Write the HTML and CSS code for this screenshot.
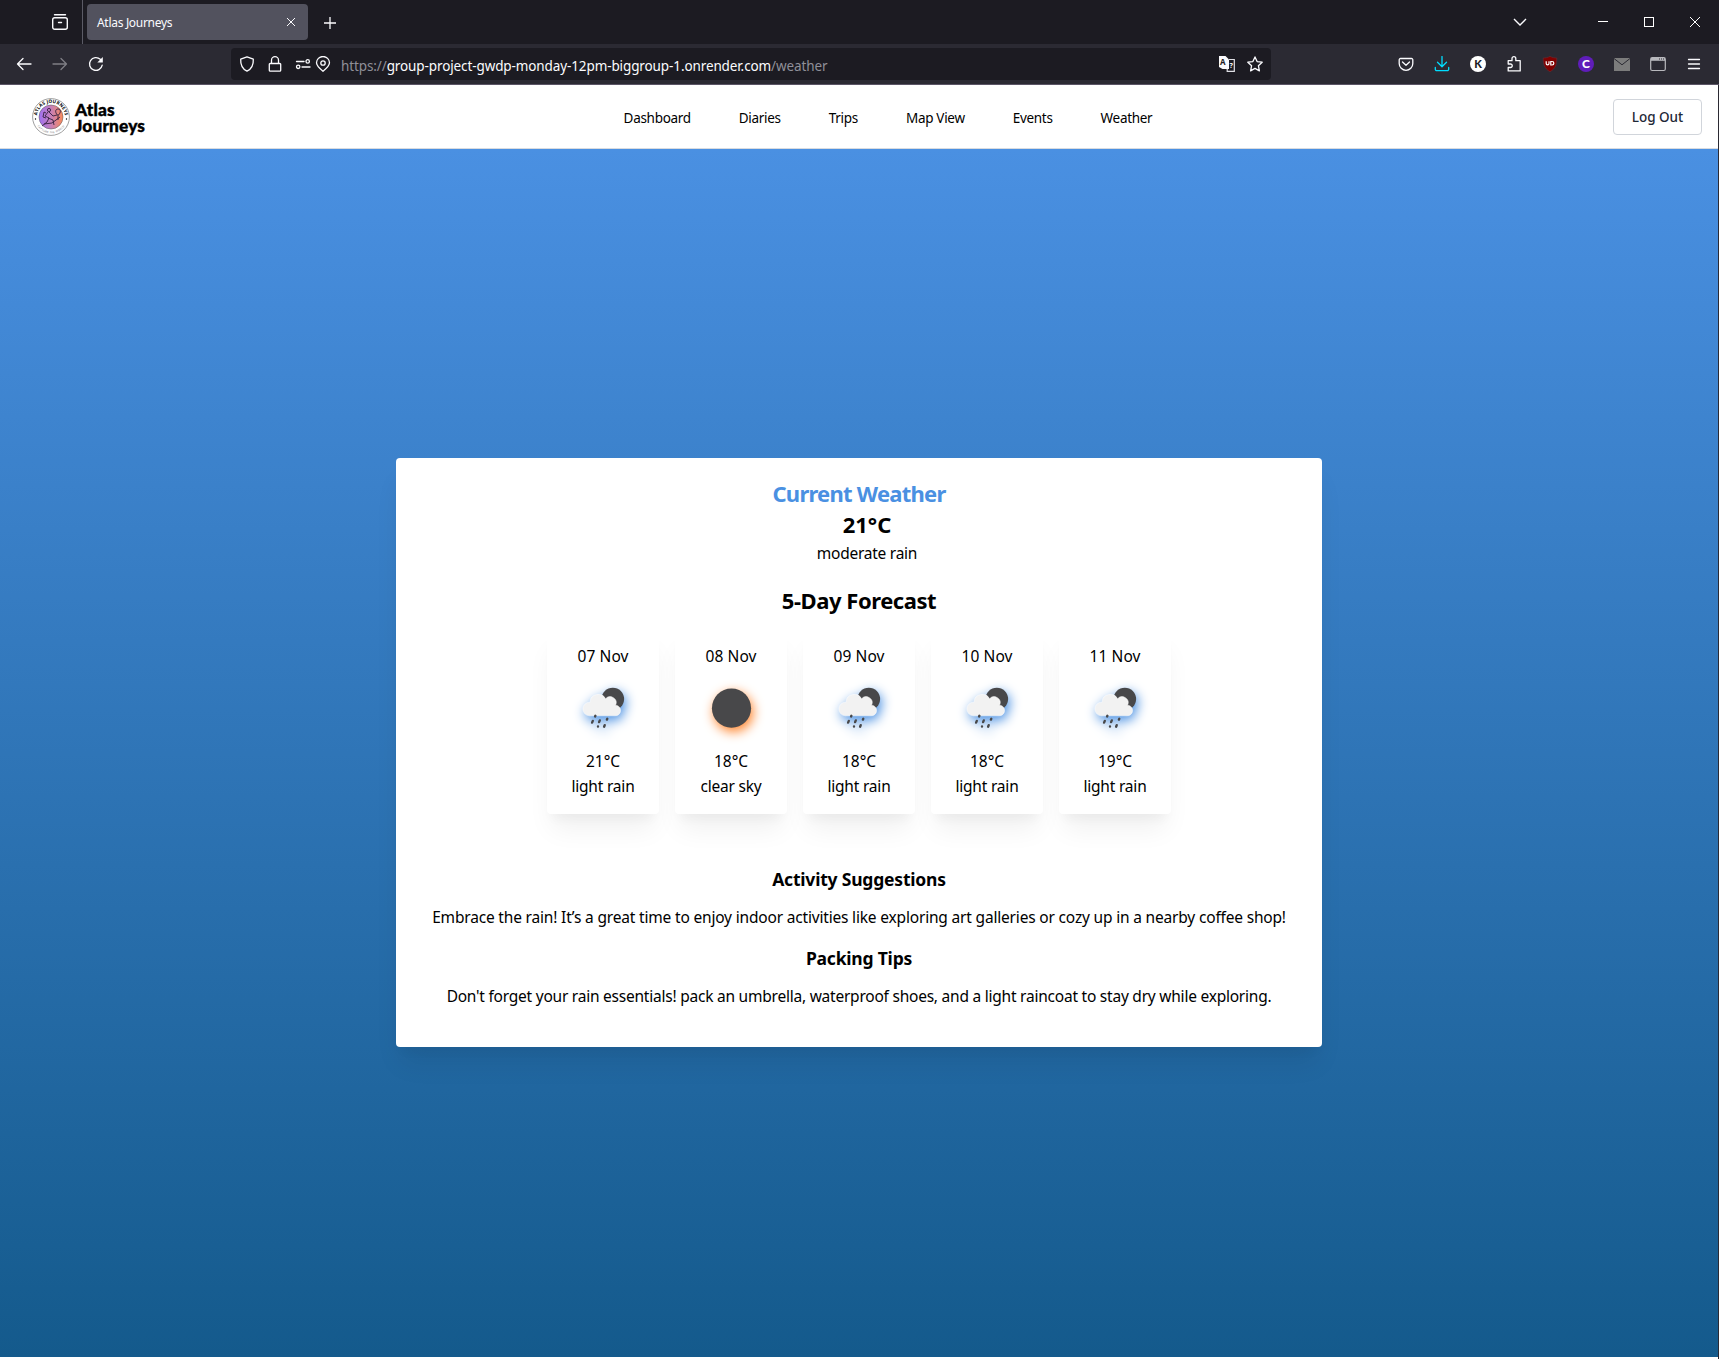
FILE: index.html
```html
<!DOCTYPE html>
<html lang="en">
<head>
<meta charset="utf-8">
<title>Atlas Journeys</title>
<link rel="stylesheet" href="styles.css">
</head>
<body>
<svg width="0" height="0" class="defs" aria-hidden="true">
  <symbol id="rain" viewBox="0 0 80 80">
    <circle cx="49.800" cy="30" r="11.300" fill="#48484a"/>
    <path d="M26.400 46.800A6.800 6.800 0 0 1 27 33.200A8.300 8.300 0 0 1 42.600 29.800A6 6 0 0 1 52.600 36.200A5.300 5.300 0 0 1 52 46.800Z" fill="#f2f2f2" stroke="#fff" stroke-width=".5"/>
    <g stroke="#48484a" stroke-width="2.400" stroke-linecap="round"><path d="M32.400 46.800l-.3.700M29.800 51.900l-.7 1.700M36.800 51.400l-.7 1.700M44.300 49.800l-.4.800M35 57.500v.1M41.700 56.200l-.6 1.500"/></g>
  </symbol>
</svg>
<div class="window">
  <div class="tabbar">
    <div class="view-btn"><svg width="18" height="18" viewBox="0 0 18 18" fill="none" stroke="#fbfbfe" stroke-width="1.400" stroke-linecap="round"><path d="M3.500 1.700h11"/><rect x="1.700" y="4.700" width="14.600" height="11.600" rx="2"/><path d="M7.500 9.500h3"/></svg></div>
    <div class="tab"><span class="tab-title">Atlas Journeys</span>
      <svg width="10" height="10" viewBox="0 0 10 10" stroke="#fbfbfe" stroke-width="1"><path d="M1 1l8 8M9 1L1 9"/></svg></div>
    <svg class="plus" width="12" height="12" viewBox="0 0 12 12" stroke="#fbfbfe" stroke-width="1.300"><path d="M6 0v12M0 6h12"/></svg>
    <div class="win-controls">
      <svg class="chev" width="14" height="8" viewBox="0 0 14 8" fill="none" stroke="#fbfbfe" stroke-width="1.400"><path d="M1 1l6 6 6-6"/></svg>
      <svg width="46" height="44" viewBox="0 0 46 44" stroke="#fff"><path d="M18 21.500h10"/></svg>
      <svg width="46" height="44" viewBox="0 0 46 44" stroke="#fff" fill="none"><rect x="18.500" y="17.500" width="9" height="9"/></svg>
      <svg width="46" height="44" viewBox="0 0 46 44" stroke="#fff"><path d="M18 17l10 10M28 17L18 27"/></svg>
    </div>
  </div>
  <div class="toolbar">
    <div class="nav-btns">
      <div class="tb"><svg width="16" height="16" viewBox="0 0 16 16" class="ln"><path d="M15 8H1.500M7 2.500L1.500 8 7 13.500"/></svg></div>
      <div class="tb dim"><svg width="16" height="16" viewBox="0 0 16 16" class="ln"><path d="M1 8h13.500M9 2.500L14.500 8 9 13.500"/></svg></div>
      <div class="tb"><svg width="16" height="16" viewBox="0 0 16 16" class="ln"><path d="M14.200 9.200A6.400 6.400 0 1 1 12.300 3.300L13.500 4.500"/><path d="M14.800 1v5.500H9.300z" fill="#fbfbfe" stroke="none"/></svg></div>
    </div>
    <div class="urlbar">
      <svg class="i-shield" width="16" height="16" viewBox="0 0 16 16"><path class="ln" d="M8 .8l6.300 2.400c.3 5.500-1.300 9.500-6.300 12-5-2.500-6.600-6.500-6.300-12z"/></svg>
      <svg class="i-lock" width="16" height="16" viewBox="0 0 16 16"><path class="ln" d="M3.200 7.500h9.600a.9.900 0 0 1 .9.900v5.900a.9.900 0 0 1-.9.900H3.200a.9.900 0 0 1-.9-.9V8.400a.9.900 0 0 1 .9-.9zM4.500 7.500V4.200a3.500 3.500 0 0 1 7 0v3.300"/></svg>
      <svg class="i-perm" width="16" height="16" viewBox="0 0 16 16"><path class="ln" d="M1.500 5.500h7.500M7 11h8"/><circle class="ln" cx="12.700" cy="5.400" r="1.700"/><circle class="ln" cx="3.200" cy="10.800" r="1.700"/></svg>
      <svg class="i-pin" width="16" height="16" viewBox="0 0 16 16"><path class="ln" d="M8 15.300C4 12 1.500 9.500 1.500 6.800a6.500 6.300 0 0 1 13 0C14.500 9.500 12 12 8 15.300z"/><circle class="ln" cx="8" cy="7" r="2.200"/></svg>
      <span class="url">https://<b>group-project-gwdp-monday-12pm-biggroup-1.onrender.com</b>/weather</span>
      <svg class="i-tr" width="16" height="16" viewBox="0 0 16 16"><path d="M0 0h6.500L10 3.500V13H3.500L0 11z" fill="#fbfbfe"/><text x="1" y="8.800" class="tr-a">A</text><path d="M10 3.500h5.300v11.800H8.200V13" fill="none" stroke="#e0e0e6" stroke-width="1.200"/><text x="10.400" y="12.300" class="tr-q">?</text></svg>
      <svg class="i-star" width="16" height="16" viewBox="0 0 16 16"><path class="ln" d="M8 .9l2.100 4.700 5.100.6-3.800 3.500 1 5.200L8 12.400l-4.400 2.500 1-5.200L.8 6.200l5.100-.6z"/></svg>
    </div>
    <div class="exts">
      <div class="tb"><svg width="16" height="16" viewBox="0 0 16 16" class="ln"><path d="M2.500 2.500h11a1.300 1.300 0 0 1 1.300 1.300V7.500a6.800 6.800 0 0 1-13.600 0V3.800a1.300 1.300 0 0 1 1.300-1.300z"/><path d="M4.500 6L8 9.300 11.500 6"/></svg></div>
      <div class="tb"><svg width="16" height="16" viewBox="0 0 16 16" class="ln cyan"><path d="M8 .5v10M3.500 6.300L8 10.700l4.500-4.400M1.300 11.500v1.700a1.500 1.500 0 0 0 1.500 1.500h10.400a1.500 1.500 0 0 0 1.500-1.500v-1.700"/></svg></div>
      <div class="tb"><span class="disc k">K</span></div>
      <div class="tb"><svg width="16" height="16" viewBox="0 0 16 16" class="ln"><path d="M2.200 8V4.700H6V2.600a1.900 1.900 0 0 1 3.800 0v2.100h4.400v10.200H2.200v-3.400h2.300a1.700 1.700 0 0 0 0-3.500z"/></svg></div>
      <div class="tb"><svg width="16" height="16" viewBox="0 0 16 16"><path d="M8 .3c2 1.300 4.500 1.700 6.800 1.700 0 6.500-1 10.300-6.800 13.800C2.200 12.300 1.200 8.500 1.200 2 3.500 2 6 1.600 8 .3z" fill="#800000" stroke="#5f3039" stroke-width=".6"/><path d="M4.200 5.300v2.200a1.400 1.400 0 0 0 2.800 0V5.300M8.800 5.500h1.300a1.700 1.700 0 0 1 0 3.500H8.800z" fill="none" stroke="#fff" stroke-width="1.200"/></svg></div>
      <div class="tb"><span class="disc c">C</span></div>
      <div class="tb"><svg width="16" height="16" viewBox="0 0 16 16"><path d="M0 2h16v13H0z" fill="#7c7c7c"/><path d="M0 2.500l8 6.300 8-6.300" fill="none" stroke="#2b2a33" stroke-width="1"/></svg></div>
      <div class="tb"><svg width="16" height="16" viewBox="0 0 16 16"><rect x=".7" y="1.700" width="14.600" height="12.800" rx="1.500" fill="none" stroke="#b8b8bd" stroke-width="1.200"/><path d="M1 2h14v2.800H1z" fill="#b8b8bd"/><path d="M9 3h1M11 3h1M13 3h1" stroke="#2b2a33"/></svg></div>
      <div class="tb"><svg width="16" height="16" viewBox="0 0 16 16" class="ln"><path d="M2.500 3.500h11M2.500 8h11M2.500 12.500h11"/></svg></div>
    </div>
  </div>
  <div class="page">
    <header class="header">
      <div class="brand">
        <svg width="38" height="38" viewBox="0 0 38 38">
          <defs><linearGradient id="lg"><stop offset="0" stop-color="#a070f4"/><stop offset=".5" stop-color="#c680b8"/><stop offset="1" stop-color="#fb8a58"/></linearGradient>
          <path id="arcT" d="M4.900 19a14.100 14.100 0 0 1 28.200 0"/><path id="arcB" d="M2.700 19a16.300 16.300 0 0 0 32.600 0"/></defs>
          <circle cx="19" cy="19" r="18.400" fill="#fff" stroke="#777" stroke-width=".7"/>
          <circle cx="19" cy="19" r="12" fill="url(#lg)" stroke="#555" stroke-width=".5"/>
          <text class="ring-t"><textPath href="#arcT" startOffset="50%" text-anchor="middle" textLength="41">ATLAS JOURNEYS</textPath></text>
          <text class="ring-b"><textPath href="#arcB" startOffset="50%" text-anchor="middle">CAPTURE THE WORLD</textPath></text>
          <circle cx="3.500" cy="21" r=".7"/><circle cx="34.500" cy="21" r=".7"/>
          <g fill="none" stroke="#33203f" stroke-width=".9"><circle cx="17" cy="12" r="1.600"/><path d="M16 14l-3 4 4 2-2 4-5 4M17 14l4 4 4-1M16 20l5 2 1 5M12 26l8-1 8-6M14 15l-2-1-1 5 3 1"/><path d="M25.500 17c-3-3-2-6 .5-6s3.500 3 .500 6zM26 17v5"/></g>
        </svg>
        <div class="brand-name"><span>Atlas</span><span>Journeys</span></div>
      </div>
      <nav class="nav"><a>Dashboard</a><a>Diaries</a><a>Trips</a><a>Map View</a><a>Events</a><a>Weather</a></nav>
      <button class="logout">Log Out</button>
    </header>
    <main class="hero">
      <section class="panel">
        <h2 class="current">Current Weather</h2>
        <div class="now"><strong>21°C</strong><span>moderate rain</span></div>
        <h2 class="fc-title">5-Day Forecast</h2>
        <div class="forecast">
          <div class="day"><span class="date">07 Nov</span><svg class="wx rain"><use href="#rain"/></svg><span>21°C</span><span class="desc">light rain</span></div>
          <div class="day"><span class="date">08 Nov</span><svg class="wx sun" viewBox="0 0 80 80"><circle cx="40.500" cy="39.200" r="19.600" fill="#48484a"/></svg><span>18°C</span><span class="desc">clear sky</span></div>
          <div class="day"><span class="date">09 Nov</span><svg class="wx rain"><use href="#rain"/></svg><span>18°C</span><span class="desc">light rain</span></div>
          <div class="day"><span class="date">10 Nov</span><svg class="wx rain"><use href="#rain"/></svg><span>18°C</span><span class="desc">light rain</span></div>
          <div class="day"><span class="date">11 Nov</span><svg class="wx rain"><use href="#rain"/></svg><span>19°C</span><span class="desc">light rain</span></div>
        </div>
        <h3>Activity Suggestions</h3>
        <p class="activity">Embrace the rain! It’s a great time to enjoy indoor activities like exploring art galleries or cozy up in a nearby coffee shop!</p>
        <h3>Packing Tips</h3>
        <p class="packing">Don't forget your rain essentials! pack an umbrella, waterproof shoes, and a light raincoat to stay dry while exploring.</p>
      </section>
    </main>
  </div>
</div>
</body>
</html>
```

FILE: styles.css
```css
* { box-sizing: border-box; }
body { margin: 0; font-family: "Noto Sans", "Open Sans", sans-serif; font-size: 15.5px; color: #000; background: #2b2a33; overflow: hidden; }
.defs { position: absolute; }
.window { width: 1719px; height: 1359px; display: flex; flex-direction: column; }
.ln { fill: none; stroke: #fbfbfe; stroke-width: 1.3; stroke-linecap: round; stroke-linejoin: round; }
.ln.cyan { stroke: #00ddff; }

.tabbar { height: 44px; background: #1c1b22; display: flex; align-items: center; }
.view-btn { width: 83px; height: 44px; border-right: 1px solid #5b5b66; padding: 13px 0 0 51px; }
.tab { margin-left: 4px; width: 221px; height: 36px; border-radius: 4px; background: #52525e; display: flex; align-items: center; justify-content: space-between; padding: 0 12px 0 10px; color: #fbfbfe; }
.tab-title { font-size: 12px; letter-spacing: -0.3px; padding-top: 1px; }
.plus { margin: 1px 0 0 16px; }
.win-controls { margin-left: auto; display: flex; align-items: center; padding-right: 1px; }
.chev { margin-right: 53px; }

.toolbar { height: 41px; background: #2b2a33; border-bottom: 1px solid #5b5566; display: flex; }
.nav-btns { display: flex; padding-left: 6px; }
.tb { width: 36px; height: 40px; display: flex; align-items: center; justify-content: center; }
.dim { opacity: .4; }
.urlbar { margin: 4px 0 0 117px; width: 1040px; height: 32px; border-radius: 4px; background: #1c1b22; display: flex; align-items: center; padding: 0 8px; }
.i-lock { margin-left: 12px; }
.i-perm { margin-left: 12px; }
.i-pin { margin-left: 4px; }
.url { margin-left: 10px; padding-top: 3px; font-size: 13.5px; letter-spacing: -0.11px; color: #8f8f98; white-space: nowrap; }
.url b { font-weight: 400; color: #fbfbfe; }
.i-tr { margin-left: auto; }
.i-star { margin-left: 12px; }
.tr-a { font: 700 8px "Noto Sans", sans-serif; fill: #1c1b22; }
.tr-q { font: 700 7px "Noto Sans", sans-serif; fill: #fbfbfe; }
.exts { margin-left: auto; display: flex; padding-right: 7px; }
.disc { width: 16px; height: 16px; border-radius: 50%; font: 900 11px/16px Lato, sans-serif; text-align: center; }
.k { background: #fff; color: #1c1b22; }
.c { background: #5f1dba; color: #fff; font-size: 12px; }

.page { flex: 1; width: 1718px; background: #fff; display: flex; flex-direction: column; }
.header { height: 64px; border-bottom: 1px solid #d8dbe0; display: flex; justify-content: space-between; align-items: center; padding: 0 16px; }
.brand { width: 147px; display: flex; gap: 5px; padding-left: 16px; align-items: center; }
.brand-name { display: flex; flex-direction: column; font: 900 17.3px/16px Lato, sans-serif; letter-spacing: .15px; -webkit-text-stroke: .4px #000; padding-top: 2px; }
.ring-t { font: 700 4.6px "Open Sans", sans-serif; }
.ring-b { font: 400 2.6px "Open Sans", sans-serif; fill: #666; letter-spacing: .3px; }
.nav { display: flex; gap: 48px; font-size: 13.5px; letter-spacing: -0.3px; padding-top: 2px; }
.logout { width: 89px; height: 36px; border: 1px solid #d1d5db; border-radius: 4px; background: #fff; font: 500 13.5px "Noto Sans", sans-serif; color: #1f2937; padding: 0; }
.hero { height: 1208px; background: linear-gradient(#4a90e2, #145a8c); display: flex; justify-content: center; align-items: flex-start; padding-top: 309px; }
.panel { width: 926px; height: 589px; background: #fff; border-radius: 4px; box-shadow: 0 20px 25px -5px rgba(0,0,0,.08), 0 10px 10px -5px rgba(0,0,0,.03); display: flex; flex-direction: column; align-items: center; padding-top: 19px; }
h2, h3, p { margin: 0; white-space: nowrap; }
h2, .now strong { font-size: 22px; line-height: 32px; font-weight: 700; }
.current { color: #4a90e2; letter-spacing: -0.75px; }
.now { display: flex; flex-direction: column; align-items: center; padding-left: 16px; margin-top: -1px; }
.now span { line-height: 24px; margin-top: 1px; letter-spacing: -0.25px; }
.fc-title { margin-top: 19px; letter-spacing: -0.45px; }
.forecast { display: flex; gap: 16px; margin-top: 11px; }
.day { width: 112px; height: 187px; border-radius: 4px; background: #fff; padding-top: 17px; display: flex; flex-direction: column; align-items: center; line-height: 25px; box-shadow: 0 20px 25px -5px rgba(0,0,0,.06), 0 10px 10px -5px rgba(0,0,0,.035); }
.date { letter-spacing: .1px; }
.desc { letter-spacing: -0.2px; }
.wx { width: 80px; height: 80px; flex: none; }
.rain { filter: drop-shadow(2px 4px 6px rgba(74,144,226,1)); }
.sun { filter: drop-shadow(2px 4px 6px rgba(255,130,40,1)); }
h3 { font-size: 17.5px; line-height: 28px; margin-top: 51px; letter-spacing: -0.2px; }
p { line-height: 24px; margin-top: 12px; }
.activity { letter-spacing: -0.18px; }
.packing { letter-spacing: -0.23px; }
p + h3 { margin-top: 15px; }
```
